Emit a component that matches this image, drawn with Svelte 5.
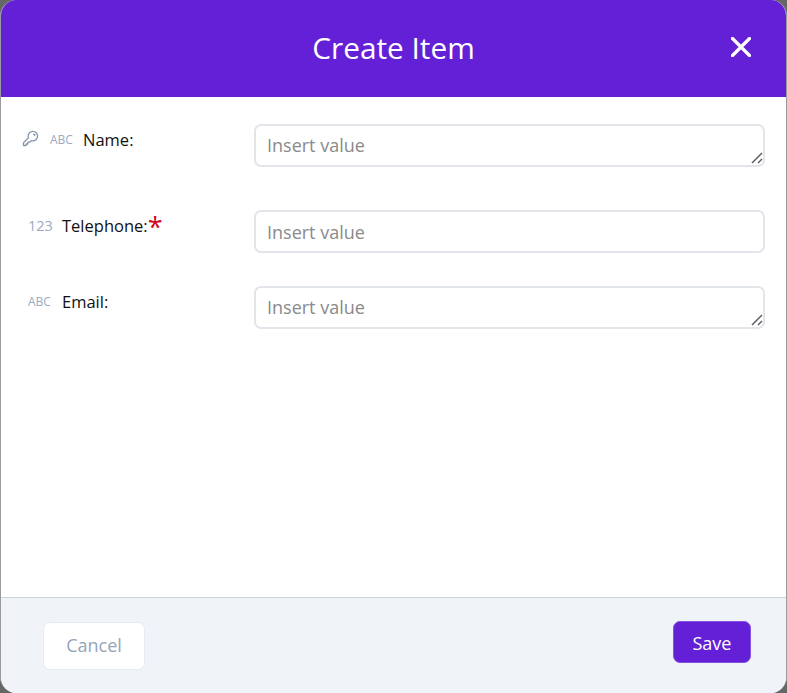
<script>
  const fields = [
    { name: 'Name:', type: 'ABC', key: true, multi: true, cls: 'r1' },
    { name: 'Telephone:', type: '123', required: true, cls: 'r2' },
    { name: 'Email:', type: 'ABC', multi: true, cls: 'r3' }
  ];
</script>

<div class="modal">
  <header class="head">
    <h1>Create Item</h1>
    <button class="close" aria-label="Close">
      <svg width="20" height="20" viewBox="0 0 20 20"><path d="M1.500 1.500 L18.500 18.500 M18.500 1.500 L1.500 18.500" stroke="#fff" stroke-width="3.200" stroke-linecap="round" fill="none"/></svg>
    </button>
  </header>
  <main class="body">
    {#each fields as f}
      <div class="row {f.cls}">
        <div class="label" class:indented={f.key}>
          {#if f.key}
            <svg class="key" width="17" height="17" viewBox="0 0 17 17" fill="none" stroke="#8496ae" stroke-width="1.300" stroke-linejoin="round" stroke-linecap="round"><path d="M10.800 1.300a4.800 4.800 0 0 1 4.800 4.800c0 2.700-2.200 4.800-4.800 4.800-.6 0-1.100-.1-1.600-.3L7.600 12.200H5.800V14H4.100v1.500H1.500v-2.700L6.400 7.900c-.2-.5-.3-1.100-.3-1.700 0-2.700 2.100-4.900 4.700-4.900z"/><path d="M11.500 4.300h1.200v1.200"/></svg>
          {/if}
          <span class="type" class:num={f.type === '123'}>{f.type}</span>
          <span class="name">{f.name}</span>
          {#if f.required}<span class="req">*</span>{/if}
        </div>
        <div class="wrap">
          {#if f.multi}
            <textarea class="field multi" placeholder="Insert value"></textarea>
            <svg class="grip" width="12" height="12" viewBox="0 0 12 12" fill="none" stroke="#5f5f5f" stroke-width="1.500"><path d="M1 11 L11 1 M7 11 L11 7"/></svg>
          {:else}
            <input class="field" placeholder="Insert value" />
          {/if}
        </div>
      </div>
    {/each}
  </main>
  <footer class="foot">
    <button class="btn cancel">Cancel</button>
    <button class="btn save">Save</button>
  </footer>
</div>

<style>
  :global(body) { margin: 0; background: #666; }
  .modal {
    width: 787px; height: 693px; box-sizing: border-box;
    display: flex; flex-direction: column;
    background: #fff; border-radius: 16px; overflow: hidden;
    border-right: 1px solid #9a9a9a; border-left: 1px solid #9a9a9a;
    font-family: "Open Sans", sans-serif;
  }
  .head {
    height: 97px; flex: none; background: #6320d6;
    display: flex; align-items: center; justify-content: center;
    position: relative; margin: 0 -1px;
  }
  h1 { margin: 0 0 2px; font-size: 29.800px; font-weight: 400; color: #fff; line-height: 1; }
  .close {
    position: absolute; right: 36px; top: 37px; padding: 0; border: 0; background: none;
    width: 20px; height: 20px; display: flex;
  }
  .body { flex: 1; padding: 27px 21px 0 20px; display: flex; flex-direction: column; }
  .row { display: grid; grid-template-columns: 233px 1fr; align-items: start; }
  .r1 { height: 86px; }
  .r2 { height: 76px; }
  .label { display: flex; align-items: flex-start; padding: 5px 0 0 7px; line-height: 22px; color: #111; font-size: 16.500px; }
  .label.indented { padding-left: 0; }
  .key { margin: 1px 11px 0 1px; flex: none; }
  .type { color: #9aaac2; font-size: 12px; width: 34px; flex: none; line-height: 22px; }
  .label.indented .type { width: 33px; }
  .type.num { font-size: 14.500px; }
  .name { font-size: 16.500px; }
  .req { color: #cf0a1c; font-size: 27px; line-height: 24px; }
  .wrap { position: relative; height: 43px; }
  .grip { position: absolute; right: 2px; bottom: 3px; pointer-events: none; }
  .field {
    display: block; box-sizing: border-box; width: 100%; height: 43px; margin: 0;
    border: 2px solid #e2e6ea; border-radius: 7px; outline: none; background: #fff;
    padding: 8px 11px; font: 18px/24px "Open Sans", sans-serif; color: #333;
  }
  .field.multi { resize: none; padding-top: 7px; }
  .field::placeholder { color: #8a8a8a; opacity: 1; }
  .foot {
    height: 96px; flex: none; box-sizing: border-box; background: #f0f3f8;
    border-top: 1px solid #cfd2d6;
    display: flex; justify-content: space-between; align-items: flex-start;
    padding: 24px 35px 0 42px;
  }
  .btn { font: 18px "Open Sans", sans-serif; border-radius: 7px; box-sizing: border-box; padding: 0; }
  .cancel { width: 102px; height: 48px; padding-bottom: 2px; background: #fff; border: 1px solid #e6ebf3; color: #94a5bb; }
  .save { width: 78px; height: 42px; margin-top: -1px; padding-top: 1px; background: #6320d6; border: 1px solid #8352e0; color: #fff; }
</style>
